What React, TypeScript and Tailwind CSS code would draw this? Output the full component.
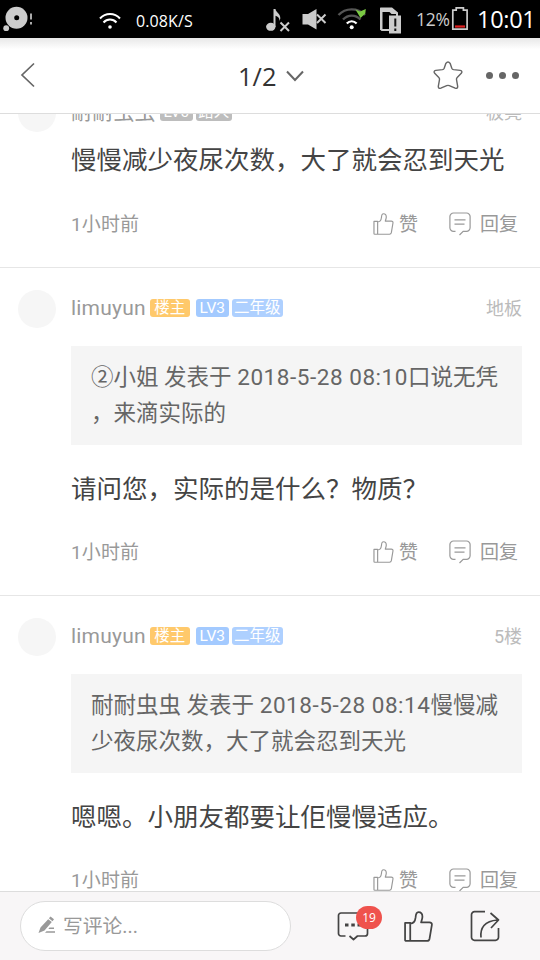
import type { ReactNode } from "react"

type Badge = { label: string; className: string }

type Post = {
  id: number
  author: string
  floor: string
  badges: Badge[]
  quote?: { author: string; date: string; rest: string; more: string }
  body: string
  bodyClassName: string
  time: string
}

const HOST: Badge = { label: "楼主", className: "mr-[6px] w-[40px] bg-[#ffc96b]" }
const LEVEL: Badge = { label: "LV3", className: "mr-[3px] w-[33px] bg-[#a3caff]" }
const GRADE: Badge = { label: "二年级", className: "w-[51px] bg-[#aed0ff]" }

const POSTS: Post[] = [
  {
    id: 3,
    author: "耐耐虫虫",
    floor: "板凳",
    badges: [
      { label: "LV0", className: "mr-[3px] w-[33px] bg-[#bdbdbd]" },
      { label: "路人", className: "w-[36px] bg-[#bdbdbd]" },
    ],
    body: "慢慢减少夜尿次数，大了就会忍到天光",
    bodyClassName: "mt-[9px] mb-[33px]",
    time: "1小时前",
  },
  {
    id: 4,
    author: "limuyun",
    floor: "地板",
    badges: [HOST, LEVEL, GRADE],
    quote: { author: "②小姐", date: "2018-5-28 08:10", rest: "口说无凭", more: "，来滴实际的" },
    body: "请问您，实际的是什么？物质？",
    bodyClassName: "mt-[25px] mb-[32px]",
    time: "1小时前",
  },
  {
    id: 5,
    author: "limuyun",
    floor: "5楼",
    badges: [HOST, LEVEL, GRADE],
    quote: { author: "耐耐虫虫", date: "2018-5-28 08:14", rest: "慢慢减", more: "少夜尿次数，大了就会忍到天光" },
    body: "嗯嗯。小朋友都要让佢慢慢适应。",
    bodyClassName: "mt-[25px] mb-[32px]",
    time: "1小时前",
  },
]

function ThumbIcon({ className }: { className: string }) {
  return (
    <svg viewBox="0 0 28 30" fill="none" stroke="currentColor" strokeLinejoin="round" className={className}>
      <path d="M1 11.500h5V29H2a1 1 0 0 1-1-1zM6 12.200c2.800 0 4.800-2.500 5.200-6C11.400 2.300 12.300 1 14 1c2.300 0 3.800 1.700 3.800 4.500 0 2-.9 3.700-1.300 5.500h8.100c1.700 0 2.600 1.100 2.300 2.600l-2.200 13.200c-.3 1.400-1.200 2.200-2.500 2.200H6" />
    </svg>
  )
}

function ReplyIcon() {
  return (
    <svg viewBox="0 0 22 24" fill="none" stroke="currentColor" strokeWidth="1.200" className="h-[24px] w-[22px]">
      <path d="M6.500 19.300H4.500a3.600 3.600 0 0 1-3.600-3.600V4.600A3.600 3.600 0 0 1 4.500 1h13a3.600 3.600 0 0 1 3.600 3.600v11.100a3.600 3.600 0 0 1-3.600 3.600h-3.300L10.500 23M5.500 7.800h11M5.500 12.200h10" />
    </svg>
  )
}

function StatusBar() {
  return (
    <div className="flex h-[38px] shrink-0 items-center bg-black font-['Open_Sans','Noto_Sans',sans-serif] text-white">
      <svg viewBox="0 0 34 38" className="h-[38px] w-[34px]">
        <circle cx="16.500" cy="17.800" r="11" fill="#ccc" />
        <circle cx="16.700" cy="17.700" r="2.500" fill="#000" />
        <circle cx="6.200" cy="28.200" r="2.900" fill="#ccc" />
        <path d="M31 13.500v6M31 22v2.600" stroke="#aaa" strokeWidth="2" />
      </svg>
      <svg viewBox="0 0 22 18" fill="none" stroke="#fff" strokeWidth="2" className="ml-[65px] mt-[4px] h-[18px] w-[22px]">
        <path d="M1 6.500c5.500-6 14.500-6 20 0M4.500 10.500c3.600-4 9.400-4 13 0" />
        <circle cx="11" cy="15" r="1.800" fill="#fff" stroke="none" />
      </svg>
      <span className="ml-[15px] mt-[4px] text-[16px] tracking-[0.1px]">0.08K/S</span>
      <div className="ml-auto flex items-center">
        <svg viewBox="0 0 140 38" fill="none" className="h-[38px] w-[140px]">
          <g fill="#ccc">
            <ellipse cx="9.800" cy="26.800" rx="4.700" ry="4" />
            <path d="M12.500 9h2c.3 3.200 5.300 5 4.800 9.500l-.8 2.500c.2-3-1.500-4.500-4-5.300V27h-2z" />
            <path d="M41.500 14h5.500l8.500-5v20.500l-8.500-5h-5.500z" />
            <path d="M119.500 7.500H131l6 5v18.500h-16.500l-1.500-1.500V8z" />
          </g>
          <path d="M121.500 12h7l2 2h4.500v15h-13.500z" fill="#000" />
          <path d="M128 15.500h12.500v18H128z" fill="#ccc" />
          <path d="M19.500 22.500l8.500 8.500m0-8.500L19.500 31M56 14.500l8.500 8.500m0-8.500L56 23" stroke="#ccc" strokeWidth="2" />
          <path d="M77.500 15c7-7.500 19-7.500 26.500 0M82 19.500c5-5.200 12.500-5.200 17.500 0" stroke="#555" strokeWidth="2.400" />
          <path d="M85.800 23.500c2.800-3 7-3 9.800 0" stroke="#fff" strokeWidth="2.200" />
          <circle cx="90.700" cy="27.300" r="2" fill="#fff" />
          <path d="M94.500 9.500l4.500 2 5.800-2.500-.5 4.500-4.800 4.500z" fill="#7ac943" />
          <path d="M134.300 18.500v8M134.300 28.500v2.500" stroke="#111" strokeWidth="2" />
        </svg>
        <span className="ml-[15px] mt-[2px] w-[35px] text-[17.500px] leading-none tracking-[-0.2px] text-[#ccc]">12%</span>
        <svg viewBox="0 0 18 26" className="h-[26px] w-[18px]">
          <path d="M1.800 4.200h3.400V1.800h7.200v2.400h3.700v19H1.800z" fill="none" stroke="#ccc" strokeWidth="1.700" />
          <path d="M4 20.500h10" stroke="#e02020" strokeWidth="2.200" />
        </svg>
        <span className="ml-[8px] mr-[5px] mt-[2px] w-[58px] text-[23.500px] leading-none tracking-[-0.3px]">10:01</span>
      </div>
    </div>
  )
}

function TitleBar() {
  return (
    <header className="flex h-[76px] shrink-0 items-center border-b border-[#ddd] bg-linear-to-b from-[#e8e8e8] via-white via-15% to-white text-[#666]">
      <svg viewBox="0 0 15 26" fill="none" stroke="currentColor" strokeWidth="1.700" className="mb-[1px] ml-[20px] h-[26px] w-[15px]">
        <path d="M14 1.500L2 13l12 11.500" />
      </svg>
      <span className="ml-[203px] mt-[2px] w-[41px] font-['Open_Sans','Noto_Sans',sans-serif] text-[25.500px] text-[#333]">1/2</span>
      <svg viewBox="0 0 18 12" fill="none" stroke="currentColor" strokeWidth="2" className="ml-[7px] h-[12px] w-[18px]">
        <path d="M1 1.500l8 8.500 8-8.500" />
      </svg>
      <svg viewBox="0 0 30 29" fill="none" stroke="currentColor" strokeWidth="1.400" strokeLinejoin="round" className="mb-[1px] ml-auto h-[29px] w-[30px]">
        <path d="M12.800 2.500Q15 -.4 17.200 2.500L18.800 7.200q.5 1.200 1.800 1.400l6.600.8q2.700.7 1.100 2.900L24.200 16.500q-.9.900-.7 2.100l1.200 6.800q-.1 2.600-2.500 1.800L16.300 24.600q-1.300-.5-2.600 0L7.800 27.200q-2.400.8-2.500-1.800l1.200-6.800q.2-1.200-.7-2.100L1.700 12.300Q.1 10.100 2.800 9.400l6.600-.8q1.300-.2 1.800-1.400z" />
      </svg>
      <div className="ml-[23px] mr-[21px] flex gap-[6px]">
        <i className="size-[7px] rounded-full bg-[#666]" />
        <i className="size-[7px] rounded-full bg-[#666]" />
        <i className="size-[7px] rounded-full bg-[#666]" />
      </div>
    </header>
  )
}

function Action({ label, children }: { label: string; children: ReactNode }) {
  return (
    <span className="flex items-center">
      {children}
      <span className="mt-[2px]">{label}</span>
    </span>
  )
}

function PostItem({ post }: { post: Post }) {
  return (
    <article className="flex border-b border-[#e6e6e6] pb-[31px] pl-[18px] pr-[18px] pt-[22px]">
      <div className="mr-[15px] size-[38px] shrink-0 rounded-full bg-[#f6f6f6]" />
      <div className="min-w-0 flex-1">
        <div className="flex h-[38px] items-center text-[#999]">
          <span className="mr-[4px] text-[21px] tracking-[0.200px]">{post.author}</span>
          {post.badges.map((badge) => (
            <span
              key={badge.label}
              className={`mb-[3px] flex h-[18px] items-center justify-center rounded-[3px] text-[15.500px] leading-[18px] text-white ${badge.className}`}
            >
              {badge.label}
            </span>
          ))}
          <span className="mb-[2px] ml-auto text-[18px] text-[#bbb]">{post.floor}</span>
        </div>
        {post.quote && (
          <blockquote className="mt-[18px] h-[99px] whitespace-pre bg-[#f5f5f5] pl-[20px] pt-[13px] text-[22.500px] leading-[36px] text-[#666]">
            <p>
              {post.quote.author} 发表于 <span className="tracking-[0.550px]">{post.quote.date}</span>
              {post.quote.rest}
            </p>
            <p>{post.quote.more}</p>
          </blockquote>
        )}
        <p className={`h-[38px] whitespace-nowrap text-[25.500px] leading-[38px] text-[#444] ${post.bodyClassName}`}>
          {post.body}
        </p>
        <div className="flex h-[24px] items-center pr-[4px] text-[19px] text-[#999]">
          <time className="mr-auto mt-[2px] tracking-[0.100px]">{post.time}</time>
          <Action label="赞">
            <ThumbIcon className="mb-[1px] mr-[5px] h-[22px] w-[21px] stroke-[1.600]" />
          </Action>
          <span className="w-[31px]" />
          <Action label="回复">
            <span className="mr-[9px]">
              <ReplyIcon />
            </span>
          </Action>
        </div>
      </div>
    </article>
  )
}

function BottomBar() {
  return (
    <footer className="flex h-[69px] shrink-0 items-center border-t border-[#ddd] bg-[#f8f6f7] pl-[20px] text-[#444]">
      <div className="flex h-[50px] w-[271px] items-center rounded-full border border-[#ddd] bg-white pl-[17px] text-[#999]">
        <svg viewBox="0 0 18 18" fill="currentColor" className="mb-[2px] h-[18px] w-[18px]">
          <path d="M12.500.5l3.500 2.800-1.500 1.900L10.900 2.300zM10.200 3.200l3.600 2.900-7.300 8.400L.5 17l2-5.500zM11.500 11.500H16V13h-5.700zM8.500 15.300H17v1.500H7z" />
        </svg>
        <span className="ml-[7px] mt-[2px] text-[19.800px]">写评论...</span>
      </div>
      <div className="relative ml-[46px]">
        <svg viewBox="0 0 32 30" fill="none" stroke="currentColor" strokeWidth="1.700" strokeLinejoin="round" className="h-[30px] w-[32px]">
          <path d="M8.500 25H4a2.500 2.500 0 0 1-2.500-2.500v-18A2.500 2.500 0 0 1 4 2h24a2.500 2.500 0 0 1 2.500 2.500v18A2.500 2.500 0 0 1 28 25h-7.500l-4 3.500-4-3.500" />
          <path d="M8 14h3.500M14.300 14h3.500M20.500 14H24" strokeWidth="3.200" />
        </svg>
        <span className="absolute -top-[5px] left-[19px] flex h-[23px] w-[26px] items-center justify-center rounded-full bg-[#ef524d] font-['Open_Sans','Noto_Sans',sans-serif] text-[12px] leading-none text-white">
          19
        </span>
      </div>
      <ThumbIcon className="ml-[35px] h-[31px] w-[29px] stroke-[1.700]" />
      <svg viewBox="0 0 30 32" fill="none" stroke="currentColor" strokeWidth="1.700" strokeLinejoin="round" className="ml-[37px] h-[32px] w-[30px]">
        <path d="M15 1.700H4.500a3 3 0 0 0-3 3v22.600a3 3 0 0 0 3 3h21a3 3 0 0 0 3-3V18" />
        <path d="M11 27.500c-1-9.500 3.500-16.500 16.500-17.500M20.500 3l8 7-7.500 8" />
      </svg>
    </footer>
  )
}

export default function App() {
  return (
    <div className="flex h-[960px] w-[540px] flex-col overflow-hidden bg-white font-['Roboto','Noto_Sans_CJK_SC',sans-serif]">
      <StatusBar />
      <TitleBar />
      <main className="min-h-0 flex-1 overflow-hidden">
        <div className="-mt-[42px]">
          {POSTS.map((post) => (
            <PostItem key={post.id} post={post} />
          ))}
        </div>
      </main>
      <BottomBar />
    </div>
  )
}
